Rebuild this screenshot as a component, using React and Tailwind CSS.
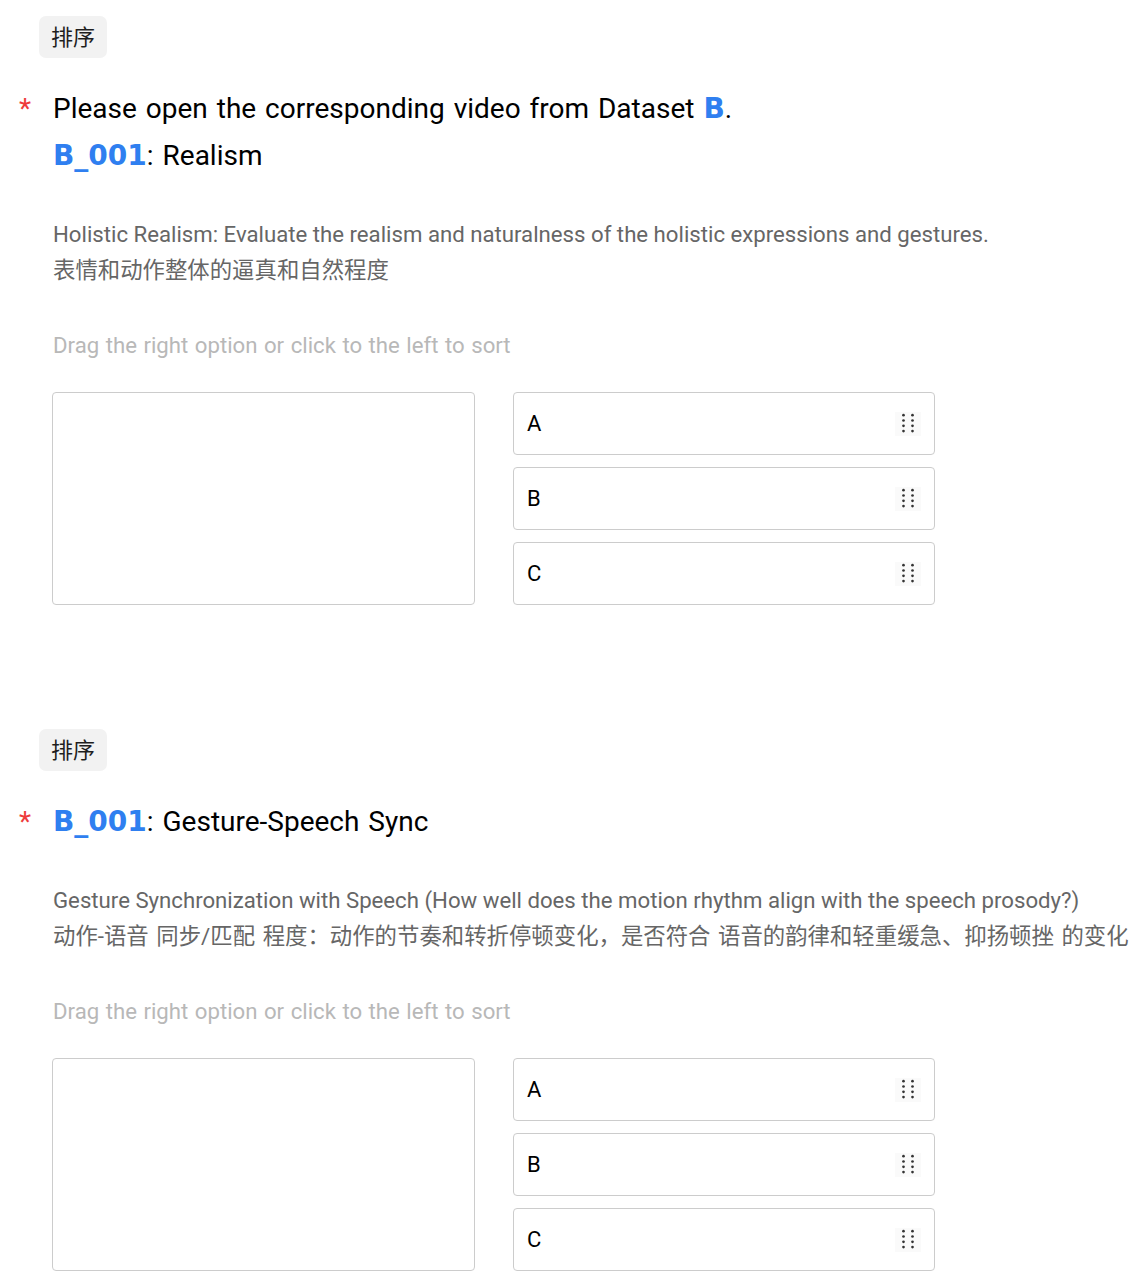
const FONT = { fontFamily: 'Roboto, "Noto Sans CJK SC", sans-serif' };

function DragIcon() {
  return (
    <div className="w-[26px] h-[24px] bg-[#fafafa] flex items-center justify-center">
      <svg width="14" height="21" viewBox="0 0 14 21" fill="#333">
        {[2.2, 7.5, 12.8, 18.1].map((y) => (
          <g key={y}>
            <circle cx="2.5" cy={y} r="1.35" />
            <circle cx="11.5" cy={y} r="1.35" />
          </g>
        ))}
      </svg>
    </div>
  );
}

function Tag() {
  return (
    <div className="ml-[39px] w-[68px] h-[42px] rounded-[7px] bg-[#f2f2f2] flex items-center justify-center text-[22px] text-[#1f1f1f]">
      排序
    </div>
  );
}

function SortArea() {
  return (
    <div className="mt-[29px] ml-[52px] flex gap-[38px]">
      <div className="w-[423px] h-[213px] border border-[#cccccc] rounded-[4px] bg-white" />
      <div className="w-[422px] flex flex-col gap-[12px]">
        {['A', 'B', 'C'].map((l) => (
          <div
            key={l}
            className="h-[63px] border border-[#cccccc] rounded-[4px] bg-white flex items-center justify-between pl-[13px] pr-[13px] text-[22px] text-black"
          >
            <span>{l}</span>
            <DragIcon />
          </div>
        ))}
      </div>
    </div>
  );
}

function Blue({ children }) {
  return (
    <span className="text-[#2f7ff0] font-bold font-['DejaVu_Sans',sans-serif] text-[28px] [word-spacing:0px]">
      {children}
    </span>
  );
}

function Section({ title, desc, first }) {
  return (
    <div className={first ? 'pt-[16px]' : 'pt-[124px]'}>
      <Tag />
      <div className="relative mt-[27px] ml-[53px] text-[28px] leading-[47px] text-black [word-spacing:2px]">
        <span className="absolute -left-[34px] top-0 text-[#ee3b3b]">*</span>
        {title}
      </div>
      <div className="mt-[37px] ml-[53px] leading-[36px] text-[#666666] whitespace-nowrap">
        <div className="text-[22.2px]">{desc[0]}</div>
        <div className="text-[22.4px] [word-spacing:2px]">{desc[1]}</div>
      </div>
      <div className="mt-[39px] ml-[53px] text-[22.2px] leading-[36px] text-[#b8b8b8] [word-spacing:1px]">
        Drag the right option or click to the left to sort
      </div>
      <SortArea />
    </div>
  );
}

export default function App() {
  return (
    <div className="w-[1132px] min-h-[1280px] bg-white overflow-hidden" style={FONT}>
      <Section
        first
        title={
          <>
            <div>
              Please open the corresponding video from Dataset <Blue>B</Blue>.
            </div>
            <div>
              <Blue>B_001</Blue>: Realism
            </div>
          </>
        }
        desc={[
          'Holistic Realism: Evaluate the realism and naturalness of the holistic expressions and gestures.',
          '表情和动作整体的逼真和自然程度',
        ]}
      />
      <Section
        title={
          <div>
            <Blue>B_001</Blue>: Gesture-Speech Sync
          </div>
        }
        desc={[
          'Gesture Synchronization with Speech (How well does the motion rhythm align with the speech prosody?)',
          '动作-语音 同步/匹配 程度：动作的节奏和转折停顿变化，是否符合 语音的韵律和轻重缓急、抑扬顿挫 的变化',
        ]}
      />
    </div>
  );
}
